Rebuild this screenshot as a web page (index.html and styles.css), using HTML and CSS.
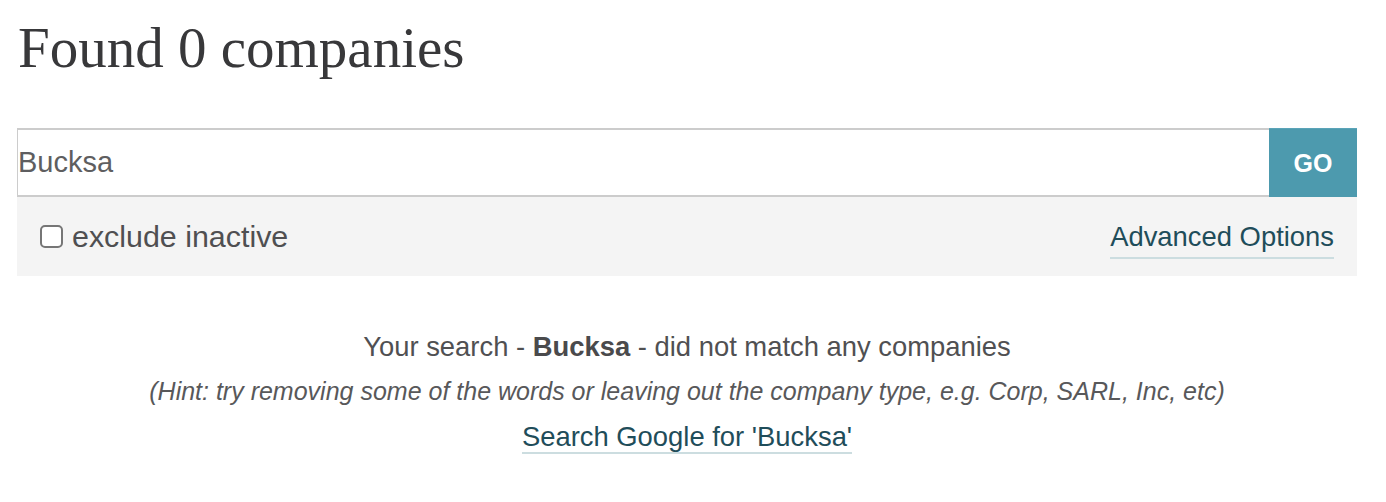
FILE: index.html
```html
<!DOCTYPE html>
<html lang="en">
<head>
<meta charset="utf-8">
<title>Found 0 companies</title>
<link rel="stylesheet" href="styles.css">
</head>
<body>
<main class="page">
  <h1 class="title">Found 0 companies</h1>
  <form class="search">
    <div class="search-row">
      <input class="search-input" type="text" value="Bucksa">
      <button class="search-go" type="button">GO</button>
    </div>
    <div class="search-options">
      <label class="exclude"><span class="checkbox"></span>exclude inactive</label>
      <a class="advanced" href="#">Advanced Options</a>
    </div>
  </form>
  <section class="results">
    <p class="msg">Your search - <strong>Bucksa</strong> - did not match any companies</p>
    <p class="hint">(Hint: try removing some of the words or leaving out the company type, e.g. Corp, SARL, Inc, etc)</p>
    <p class="msg"><a class="google" href="#">Search Google for 'Bucksa'</a></p>
  </section>
</main>
</body>
</html>
```
FILE: styles.css
```css
html, body {
  margin: 0;
  padding: 0;
  background: #ffffff;
}

.page {
  width: 1340px;
  padding-left: 17px;
  font-family: "Liberation Sans", Arial, sans-serif;
  color: #4f4f51;
}

.title {
  margin: 16px 0 0 1px;
  font-family: "Liberation Serif", "Times New Roman", serif;
  font-weight: normal;
  font-size: 57px;
  line-height: 64px;
  color: #38383a;
}

.search {
  margin-top: 48px;
}

.search-row {
  display: flex;
  height: 69px;
}

.search-input {
  flex: 1;
  box-sizing: border-box;
  height: 69px;
  margin: 0;
  border: 1px solid #cccccc;
  border-top-width: 2px;
  border-bottom-width: 2px;
  border-right: none;
  padding: 0;
  font-family: "Liberation Sans", Arial, sans-serif;
  font-size: 29px;
  color: #5e5e60;
  background: #ffffff;
  outline: none;
}

.search-go {
  width: 88px;
  height: 69px;
  margin: 0;
  border: none;
  border-top: 1px solid #5aa4b8;
  background: #4d9aae;
  color: #ffffff;
  font-family: "Liberation Sans", Arial, sans-serif;
  font-weight: bold;
  font-size: 25px;
  padding: 0;
}

.search-options {
  display: flex;
  align-items: center;
  justify-content: space-between;
  height: 79px;
  padding: 0 23px;
  background: #f4f4f4;
}

.exclude {
  display: flex;
  align-items: center;
  font-size: 30.4px;
  color: #4f4f51;
}

.checkbox {
  width: 19px;
  height: 19px;
  margin-right: 9px;
  border: 2px solid #767676;
  border-radius: 5px;
  background: #ffffff;
}

.advanced {
  font-size: 27.4px;
  color: #1f4d5a;
  text-decoration: none;
  border-bottom: 2px solid #ccdde0;
  padding-bottom: 4px;
  margin-top: 6px;
}

.results {
  margin-top: 48px;
  text-align: center;
}

.results p {
  margin: 0;
  line-height: 45px;
}

.msg {
  font-size: 27.4px;
  color: #505052;
}

.msg strong {
  color: #4a4a4c;
}

.hint {
  font-size: 25px;
  font-style: italic;
  color: #58585a;
}

.google {
  color: #1f4d5a;
  text-decoration: none;
  border-bottom: 2px solid #ccdde0;
}
```
